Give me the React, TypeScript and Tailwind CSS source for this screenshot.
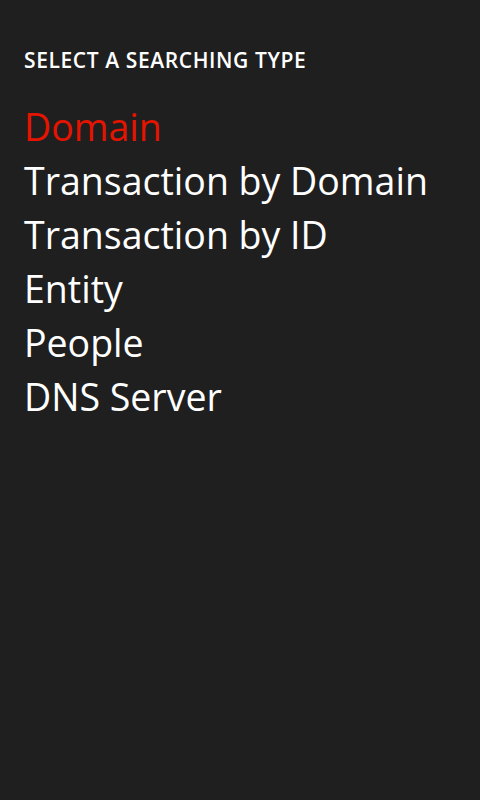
export default function App() {
  const items = ["Domain", "Transaction by Domain", "Transaction by ID", "Entity", "People", "DNS Server"];
  return (
    <div className="w-[480px] h-[800px] bg-[#1f1f1f] text-white pl-[24px]" style={{ fontFamily: '"Open Sans", "Noto Sans", sans-serif' }}>
      <div className="pt-[46px] text-[21px] leading-[28px] font-semibold tracking-[0.6px]">SELECT A SEARCHING TYPE</div>
      <div className="mt-[26px] flex flex-col">
        {items.map((t, i) => (
          <div key={t} className={`text-[37.5px] leading-[54px] ${i === 0 ? "text-[#e51400]" : "text-white"}`}>{t}</div>
        ))}
      </div>
    </div>
  );
}
